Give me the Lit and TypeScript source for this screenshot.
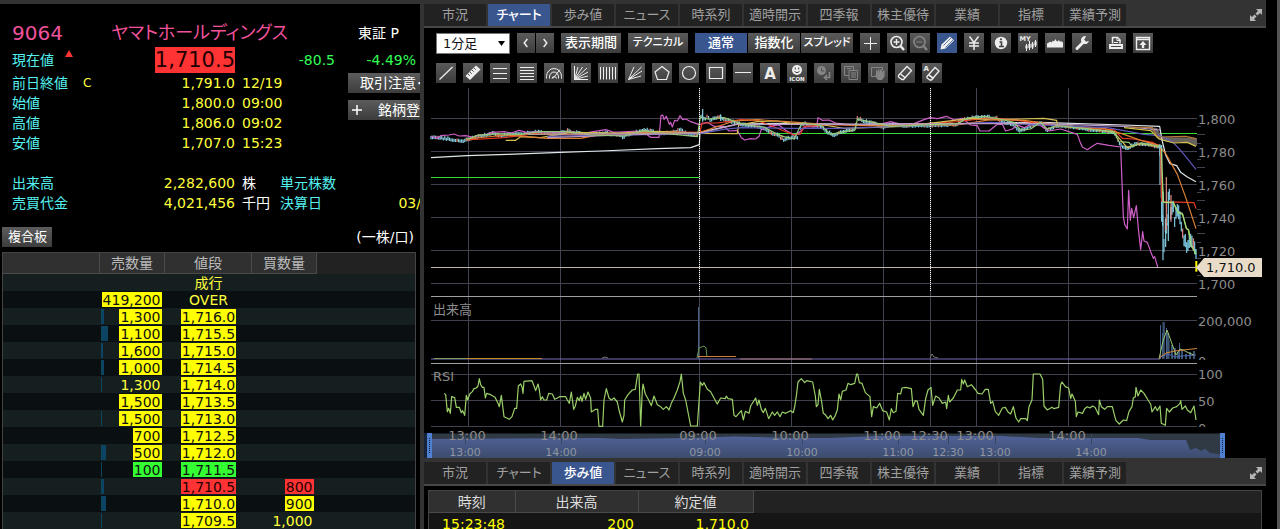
import { LitElement, html, svg, css, nothing } from "lit";
import { customElement, property, state } from "lit/decorators.js";
import { classMap } from "lit/directives/class-map.js";

const FONT = css`"DejaVu Sans", "Noto Sans CJK JP", sans-serif`;

/* ---------- icons, each on a 20 x 20 grid ---------- */
const ICONS: Record<string, unknown> = {
  cross: svg`<path d="M4 10.500H17M10.500 4V17"/>`,
  zoomIn: svg`<circle cx="9.500" cy="9" r="5.500" stroke-width="1.600"/><path d="M6.500 9h6M9.500 6v6" stroke-width="1.400"/><path d="M13.500 13l3.500 4" stroke-width="2.400"/>`,
  zoomOut: svg`<circle cx="9.500" cy="9" r="5.500" stroke-width="1.600"/><path d="M6.500 9h6"/><path d="M13.500 13l3.500 4" stroke-width="2.400"/>`,
  pencil: svg`<path d="M3.500 16.500l1-5L13 3.500l4 4-8.500 8z" fill="currentColor" stroke="none"/><path d="M6.500 12.500l7.500-7.500M8.500 14.500L16 7" stroke="#3c5a94" stroke-width=".8"/>`,
  yen: svg`<path d="M5.500 3.500L10 9.500l4.500-6M10 9.500V17M5 10h10M5 13h10" stroke-width="1.500"/>`,
  info: svg`<circle cx="10" cy="10" r="6.200" fill="currentColor" stroke="none"/><path d="M8.500 9H10.500V13.500M8 13.500h5" stroke="#444" stroke-width="1.600"/><circle cx="10" cy="6.300" r="1.100" fill="#444" stroke="none"/>`,
  candles: svg`<text x="1.500" y="7.500" font-size="6.500" font-weight="bold" fill="currentColor" stroke="none">MY</text><path d="M8.500 11v7M11.500 8v9M14.500 9v7M17.500 7v7"/><path d="M8.500 12.500v3M11.500 11v4M14.500 10.500v4M17.500 8.500v4" stroke-width="2.200"/>`,
  area: svg`<path d="M2 14.500V10.500l2-1 1-1 1.500 1L8 7.500l1 1L10.500 6l1 2 1 .5 1.500-1.500 1 2 1-1 2 1.500v5z" fill="currentColor" stroke="none"/>`,
  wrench: svg`<path d="M5 15.500L12 8.500" stroke-width="3" stroke-linecap="round"/><path d="M14 3.200a4 4 0 1 0 2.900 4.600l-2.800.9-2-1.800z" fill="currentColor" stroke="none"/>`,
  print: svg`<path d="M6.500 10.500V4.500h5l2.500 2.500v3.500" stroke-width="1.500"/><path d="M11 4.500V7.500h3M8 9.500h4"/><path d="M3 11h14v5H3z" fill="currentColor" stroke="none"/><path d="M5 13.500h10" stroke="#444"/>`,
  upload: svg`<path d="M3.500 4.500h13v12h-13zM3 6.500h14" stroke-width="1.400"/><path d="M10 8l3.500 4h-2.300v3H8.800v-3H6.500z" fill="currentColor" stroke="none"/>`,
  line: svg`<path d="M3.500 16.500L16.500 4" stroke-width="1.300"/>`,
  ruler: svg`<path d="M2.500 13L13 2.500l4.500 4L7 17z" fill="currentColor" stroke="none"/><path d="M5 11l1.800 1.800M7 9l1.800 1.800M9 7l1.800 1.800M11 5l1.800 1.800" stroke="#555"/>`,
  lines3: svg`<path d="M3 5.500h14M3 10.500h14M3 15.500h14"/>`,
  lines5: svg`<path d="M3 4.500h14M3 7.500h14M3 10.500h14M3 13.500h14M3 16.500h14"/>`,
  arcs: svg`<path d="M2.500 15.500v-2a7.500 8 0 0 1 15 0v2M5.500 15.500v-1.500a4.500 5 0 0 1 9 0v1.500M8 15.500a2.300 2.500 0 0 1 4.500 0M9 15.500l7-9"/>`,
  gann: svg`<path d="M3.500 3v13.500H17M3.500 16.500L7 4M3.500 16.500L11.500 4M3.500 16.500L16 5M3.500 16.500L17 9M3.500 16.500L17 13"/>`,
  bars: svg`<path d="M2.500 4v12.500M5.500 4v12.500M8.500 4v12.500M11.500 4v12.500M14.500 4v12.500M17.500 4v12.500"/>`,
  fan: svg`<path d="M3.500 16.500L9 4M3.500 16.500L16.500 4M3.500 16.500L17 8M3.500 16.500L16 13"/>`,
  pentagon: svg`<path d="M10 3.500L17 9l-2.500 7.500h-9L3 9z" stroke-width="1.200"/>`,
  circle: svg`<circle cx="10" cy="10" r="6.500" stroke-width="1.200"/>`,
  rect: svg`<path d="M3.500 4.500h13v11h-13z" stroke-width="1.200"/>`,
  hline: svg`<path d="M2 9.500h16"/>`,
  text: svg`<text x="10" y="15.500" text-anchor="middle" font-size="15" font-weight="bold" fill="currentColor" stroke="none">A</text>`,
  face: svg`<circle cx="10" cy="7" r="5" fill="currentColor" stroke="none"/><path d="M8.300 4.500v2M11.700 4.500v2M7.500 8.500q2.500 2.500 5 0" stroke="#444"/><text x="10" y="18" text-anchor="middle" font-size="5.500" font-weight="bold" fill="currentColor" stroke="none">ICON</text>`,
  history: svg`<circle cx="7.500" cy="7.500" r="4.500" fill="currentColor" stroke="none"/><path d="M7.500 5v3h3" stroke="#505050"/><path d="M15.500 9v5.500H11M13 12l-2.500 2.500L13 17" stroke-width="1.600"/>`,
  copy: svg`<path d="M8 12.500H3.500v-9h9V7M6 5.500h4M8 7.500h8.500v9H8zM10 10h5M10 12h5M10 14h5"/>`,
  hand: svg`<path d="M7 13.500H3.500v-9h11V7"/><path d="M8 11V7.500h1.500V11l.5-4.500h1.500V10l.8-3.500H14V10l1-2.500h1.500v6L14 17h-4l-3-4z" fill="currentColor" stroke="none"/>`,
  eraser: svg`<path d="M3.500 12.500L12 3.500l4.500 4L8.500 16.500H7L3.500 14z" stroke-width="1.300"/><path d="M5.500 11l5 4" stroke-width="1.600"/>`,
  eraserAll: svg`<path d="M5 13.500L13 4.500l4 3.500-7.500 9H8L5 15z" stroke-width="1.300"/><path d="M7 12l4.500 3.500" stroke-width="1.600"/><text x="1.500" y="8" font-size="7" font-weight="bold" fill="currentColor" stroke="none">A</text>`,
  prev: svg`<path d="M11.500 5.500L8 10l3.500 4.500" stroke-width="1.600"/>`,
  next: svg`<path d="M8.500 5.500L12 10l-3.500 4.500" stroke-width="1.600"/>`,
  expand: svg`<path d="M10 4h6v6l-2-2-2.500 2.500-2-2L12 6zM4 10l2 2 2.500-2.500 2 2L8 14l2 2H4z" fill="currentColor" stroke="none"/>`,
};

const icon = (name: string) => html`<svg class="icon" viewBox="0 0 20 20" fill="none" stroke="currentColor" aria-hidden="true">${ICONS[name]}</svg>`;

/* ---------- quote panel ---------- */
type Tone = "hot" | "up" | "down" | "plain";
interface Level { sell?: string; price: string; buy?: string; bar: number; tone: Tone; size: Tone }

const LEVELS: Level[] = [
  { price: "成行", bar: 0, tone: "plain", size: "plain" },
  { sell: "419,200", price: "OVER", bar: 0, tone: "plain", size: "hot" },
  { sell: "1,300", price: "1,716.0", bar: 3, tone: "hot", size: "hot" },
  { sell: "1,100", price: "1,715.5", bar: 7, tone: "hot", size: "hot" },
  { sell: "1,600", price: "1,715.0", bar: 2, tone: "hot", size: "hot" },
  { sell: "1,000", price: "1,714.5", bar: 3, tone: "hot", size: "hot" },
  { sell: "1,300", price: "1,714.0", bar: 1, tone: "hot", size: "plain" },
  { sell: "1,500", price: "1,713.5", bar: 0, tone: "hot", size: "hot" },
  { sell: "1,500", price: "1,713.0", bar: 1, tone: "hot", size: "hot" },
  { sell: "700", price: "1,712.5", bar: 0, tone: "hot", size: "hot" },
  { sell: "500", price: "1,712.0", bar: 5, tone: "hot", size: "hot" },
  { sell: "100", price: "1,711.5", bar: 1, tone: "up", size: "up" },
  { price: "1,710.5", buy: "800", bar: 3, tone: "down", size: "down" },
  { price: "1,710.0", buy: "900", bar: 5, tone: "hot", size: "hot" },
  { price: "1,709.5", buy: "1,000", bar: 1, tone: "hot", size: "plain" },
];

@customElement("quote-panel")
class QuotePanel extends LitElement {
  static styles = css`
    :host { display: block; overflow: hidden; background: #000; color: #ffff3c; font: 14px/20px ${FONT}; white-space: nowrap; }
    .quote { padding-top: 15px; }
    .row { display: flex; align-items: center; padding-left: 12px; height: 20px; }
    .row > * { flex: none; }
    .title { height: 28px; color: #f0529c; font-size: 20px; }
    .code { width: 99px; }
    .name { width: 247px; margin: 0; font: inherit; font-size: 18px; font-feature-settings: "palt"; }
    .market { color: #fff; font-size: 14px; }
    .now { height: 26px; }
    .label { color: #55f0f0; width: 71px; }
    .now .label { width: 52px; }
    .arrow { width: 10px; height: 8px; fill: #f33; margin-bottom: 12px; }
    .now .last { margin-left: auto; background: #f33; color: #200; font-size: 21px; line-height: 26px; }
    .now-left { display: flex; align-items: center; width: 223px; }
    .diff { width: 100px; text-align: right; color: #3f5; }
    .ratio { width: 81px; text-align: right; color: #3f5; }
    .split { display: flex; }
    .prices { width: 348px; flex: none; }
    .flag { width: 20px; font-size: 12px; }
    .value { width: 132px; text-align: right; margin-right: 7px; }
    .unit { color: #fff; width: 38px; }
    .wide .sub { width: 100px; }
    .actions { display: flex; flex-direction: column; gap: 7px; flex: none; }
    button { font: inherit; color: #fff; border: 0; padding: 0 6px; height: 20px; line-height: 20px; background: linear-gradient(#5c5c5c, #3c3c3c); text-align: left; }
    .actions button { display: flex; align-items: center; width: 100px; height: 20px; padding: 0 0 0 12px; }
    .actions .add { padding-left: 4px; gap: 16px; }
    .add svg { width: 10px; height: 10px; stroke: #fff; stroke-width: 1.5; }
    .gap { height: 20px; }
    .bar { display: flex; justify-content: space-between; align-items: center; padding: 14px 6px 5px 2px; color: #fff; }
    .bar button { font-size: 13px; width: 50px; }
    table { border-collapse: collapse; table-layout: fixed; width: calc(100% - 6px); margin-left: 2px; background: #202020; border: 1px solid #444; border-bottom: 0; }
    th { height: 20px; line-height: 20px; padding: 0; font-weight: normal; color: #bbb; background: #303030; border-right: 1px solid #4a4a4a; border-bottom: 1px solid #4a4a4a; }
    th:last-child { background: #222; border: 0; }
    td { height: 17px; line-height: 15px; padding: 0; }
    tbody tr { background: #0a1012; }
    tbody tr:nth-child(odd) { background: #151f20; }
    .c1 { width: 97px; } .c2 { width: 65px; } .c3 { width: 87px; } .c4 { width: 65px; }
    .cell { display: flex; align-items: center; height: 15px; padding: 1px 3px 1px 1px; }
    .centre { justify-content: center; padding-right: 0; }
    .depth { height: 15px; background: #0b4563; }
    .num { height: 15px; padding: 0 1px; line-height: 17px; overflow: hidden; }
    .cell .end { margin-left: auto; }
    .hot { background: #ff0; color: #111; }
    .up { background: #3f3; color: #111; }
    .down { background: #f33; color: #200; }
  `;

  private price(label: string, flag: string, value: string, when: string) {
    return html`<div class="row"><span class="label">${label}</span><span class="flag">${flag}</span><span class="value">${value}</span><span>${when}</span></div>`;
  }

  render() {
    return html`
      <section class="quote">
        <div class="row title"><span class="code">9064</span><h1 class="name">ヤマトホールディングス</h1><span class="market">東証 P</span></div>
        <div class="row now">
          <div class="now-left">
            <span class="label">現在値</span><svg class="arrow" viewBox="0 0 10 8"><path d="M5 0L9 7H1z"/></svg>
            <span class="last">1,710.5</span>
          </div>
          <span class="diff">-80.5</span><span class="ratio">-4.49%</span>
        </div>
        <div class="split">
          <div class="prices">
            ${this.price("前日終値", "C", "1,791.0", "12/19")}
            ${this.price("始値", "", "1,800.0", "09:00")}
            ${this.price("高値", "", "1,806.0", "09:02")}
            ${this.price("安値", "", "1,707.0", "15:23")}
          </div>
          <div class="actions">
            <button>取引注意･規制</button>
            <button class="add"><svg viewBox="0 0 10 10"><path d="M5 0V10M0 5H10"/></svg>銘柄登録</button>
          </div>
        </div>
        <div class="gap"></div>
        <div class="row wide"><span class="label">出来高</span><span class="flag"></span><span class="value">2,282,600</span><span class="unit">株</span><span class="label sub">単元株数</span></div>
        <div class="row wide"><span class="label">売買代金</span><span class="flag"></span><span class="value">4,021,456</span><span class="unit">千円</span><span class="label sub">決算日</span><span class="due">&emsp;&nbsp;03/31</span></div>
      </section>
      <div class="bar"><button>複合板</button><span>(一株/口)</span></div>
      <table>
        <colgroup><col class="c1"><col class="c2"><col class="c3"><col class="c4"><col></colgroup>
        <thead><tr><th></th><th>売数量</th><th>値段</th><th>買数量</th><th></th></tr></thead>
        <tbody>
          ${LEVELS.map((l) => html`<tr>
            <td></td>
            <td><div class="cell"><span class="depth" style="width:${l.bar}px"></span>${l.sell ? html`<span class="num end ${l.size}">${l.sell}</span>` : nothing}</div></td>
            <td><div class="cell centre"><span class="num ${l.tone}">${l.price}</span></div></td>
            <td><div class="cell">${l.buy ? html`<span class="num end ${l.size}">${l.buy}</span>` : nothing}</div></td>
            <td></td>
          </tr>`)}
        </tbody>
      </table>`;
  }
}

/* ---------- tab strip ---------- */
const TABS = ["市況", "チャート", "歩み値", "ニュース", "時系列", "適時開示", "四季報", "株主優待", "業績", "指標", "業績予測"];

@customElement("tab-strip")
class TabStrip extends LitElement {
  @property({ type: Number }) active = 0;
  static styles = css`
    :host { display: flex; align-items: stretch; gap: 2px; height: 22px; padding-top: 4px; background: #333; border-bottom: 2px solid #484848; }
    button { width: 62px; padding: 0; border: 0; background: #222; color: #a0a0a0; font: 13px/22px ${FONT}; font-feature-settings: "palt"; white-space: nowrap; }
    .on { background: #3a568f; color: #fff; font-weight: 500; }
    .expand { width: 20px; margin-left: auto; background: none; color: #b5b5b5; }
    .icon { display: block; width: 20px; height: 20px; }
  `;
  render() {
    return html`${TABS.map((t, i) => html`<button class=${classMap({ on: i === this.active })} @click=${() => (this.active = i)}>${t}</button>`)}
      <button class="expand" aria-label="拡大">${icon("expand")}</button>`;
  }
}

/* ---------- chart toolbar ---------- */
const DRAW = ["line", "ruler", "lines3", "lines5", "arcs", "gann", "bars", "fan", "pentagon", "circle", "rect", "hline", "text", "face", "history", "copy", "hand", "eraser", "eraserAll"];
const OFF = new Set(["zoomOut", "history", "copy", "hand"]);

@customElement("chart-tools")
class ChartTools extends LitElement {
  @state() private mode = "通常";
  static styles = css`
    :host { display: flex; flex-direction: column; gap: 10px; padding: 5px 0 3px 12px; font: 13px/20px ${FONT}; font-feature-settings: "palt"; }
    .line { display: flex; align-items: center; gap: 7px; height: 20px; }
    .join { display: flex; gap: 1px; }
    .zoom { display: flex; gap: 3px; }
    button { box-sizing: border-box; flex: none; width: 20px; height: 20px; padding: 0; border: 0; background: linear-gradient(#5a5a5a, #3d3d3d); color: #eee; font: inherit; font-weight: 500; white-space: nowrap; }
    .text { width: 60px; color: #fff; }
    .mode { width: 52px; color: #fff; }
    .small { font-size: 11px; }
    .step { width: 18px; }
    .on { background: #3a568f; }
    .off { color: #858585; }
    .apart { margin-left: 7px; }
    .icon { display: block; width: 20px; height: 20px; font-family: "DejaVu Sans", sans-serif; }
    .step .icon { width: 18px; }
    .pick { position: relative; display: flex; align-items: center; width: 74px; }
    select { appearance: none; box-sizing: border-box; width: 100%; height: 21px; padding: 0 6px; border: 1px solid #777; border-radius: 0; background: #fff; color: #111; font: inherit; line-height: 19px; }
    .caret { position: absolute; right: 5px; width: 7px; height: 5px; pointer-events: none; }
  `;
  private tool(name: string, cls = "") {
    return html`<button class="${cls} ${OFF.has(name) ? "off" : ""}" aria-label=${name}>${icon(name)}</button>`;
  }
  render() {
    return html`
      <div class="line">
        <label class="pick"><select aria-label="足種"><option>1分足</option><option>5分足</option><option>日足</option></select>
          <svg class="caret" viewBox="0 0 7 5"><path d="M0 0H7L3.500 5z"/></svg></label>
        <div class="join">${this.tool("prev", "step")}${this.tool("next", "step")}</div>
        <button class="text">表示期間</button><button class="text small">テクニカル</button>
        <div class="join">${["通常", "指数化", "スプレッド"].map((m) => html`<button class=${classMap({ mode: true, small: m.length > 4, on: m === this.mode })} @click=${() => (this.mode = m)}>${m}</button>`)}</div>
        ${this.tool("cross")}
        <div class="zoom">${this.tool("zoomIn")}${this.tool("zoomOut")}</div>
        ${this.tool("pencil", "on")}${this.tool("yen")}${this.tool("info")}${this.tool("candles")}${this.tool("area")}${this.tool("wrench")}
        ${this.tool("print", "apart")}${this.tool("upload")}
      </div>
      <div class="line">${DRAW.map((n) => this.tool(n))}</div>`;
  }
}

/* ---------- chart ---------- */
/* Series points are stored at three units per chart pixel, origin at the left edge of the chart. */
const HOURS: [number, string, number][] = [
  [468, "13:00", 465], [560, "14:00", 561], [699, "09:00", 705], [791, "10:00", 802],
  [883, "11:00", 898], [930, "12:30", 948], [976, "13:00", 995], [1068, "14:00", 1091],
];

const PRICE = "21,156 40,158 80,163 120,168 130,164 150,158 180,151 205,146 230,152 260,149 300,145 340,142 400,147 430,138 460,144 500,149 540,145 590,150 597,158 605,150 640,142 660,134 690,140 710,146 740,142 770,135 790,148 820,148 826,130 830,95 836,92 842,105 850,90 858,106 870,100 890,96 900,104 940,115 960,121 1000,124 1020,130 1040,145 1060,150 1080,165 1100,157 1120,158 1135,115 1160,120 1190,124 1210,142 1230,150 1250,140 1293,134 1298,98 1318,108 1338,112 1378,127 1408,118 1438,122 1518,122 1598,118 1620,102 1680,96 1718,100 1738,112 1768,118 1784,138 1804,132 1828,120 1848,112 1868,136 1898,122 1948,126 1998,134 2038,138 2068,142 2078,155 2088,180 2108,192 2118,186 2138,176 2168,178 2208,187";

const LINES: [string, string][] = [
  ["#cf5fc8", "21,153 40,160 50,152 75,150 90,147 105,153 125,152 145,156 165,150 190,147 205,142 240,140 262,144 285,136 310,143 340,140 400,142 450,140 480,158 495,142 545,134 570,142 640,138 665,146 680,157 705,157 711,92 716,90 720,103 727,94 736,118 740,112 745,126 752,106 760,108 768,92 776,104 786,102 800,110 826,119 850,112 870,124 900,124 915,138 940,136 952,158 962,165 980,161 995,162 1005,154 1012,134 1050,122 1065,120 1085,136 1110,150 1128,140 1145,126 1178,125 1182,98 1195,106 1215,105 1235,114 1290,122 1380,115 1400,110 1430,118 1470,116 1500,104 1518,98 1540,101 1568,94 1590,105 1615,100 1640,120 1660,122 1668,138 1695,138 1720,118 1735,118 1745,138 1765,132 1780,120 1800,128 1825,116 1850,122 1875,138 1910,132 1960,148 1968,170 1975,186 1990,194 2005,184 2020,175 2055,181 2090,186 2098,395 2102,418 2110,432 2114,316 2119,406 2123,370 2129,398 2137,362 2143,430 2150,494 2156,440 2160,468 2170,472 2180,500 2188,520 2192,515 2201,546"],
  ["#dfe6ea", "21,218 130,212 250,208 409,202 530,198 700,191 800,188 826,179 828,142 940,117 1100,115 1300,118 1600,116 1850,112 2100,120 2207,124 2214,165 2225,210 2238,236 2258,242 2270,262 2290,276 2316,290"],
  ["#e83a22", "125,165 240,158 330,146 450,150 570,150 700,140 828,142 834,114 880,114 950,104 1000,106 1080,138 1110,150 1130,146 1140,124 1230,118 1320,122 1440,120 1600,110 1700,98 1780,106 1900,123 2000,130 2070,134 2095,160 2130,162 2185,172 2208,184 2216,350 2310,353 2316,371"],
  ["#d8c050", "245,166 275,166 290,155 350,158 440,142 580,144 700,139 828,145 940,146 944,120 1000,110 1060,108 1100,115 1200,120 1260,130 1440,124 1640,100 1700,104 1790,102 1860,100 1898,106 1900,122 2000,132 2070,142 2110,188 2150,176 2208,186"],
  ["#de8034", "125,162 250,150 370,160 470,160 540,147 700,143 828,142 930,108 1000,104 1090,110 1200,118 1340,122 1500,120 1600,120 1700,104 1800,106 1920,122 2040,130 2100,148 2150,166 2205,181 2225,206 2260,268 2285,337 2316,431"],
  ["#5e59bd", "370,154 480,152 828,146 900,133 950,128 1100,130 1240,130 1380,126 1700,112 1850,120 1950,124 2050,128 2160,148 2208,152 2245,170 2270,196 2316,253"],
  ["#b89ac5", "370,158 600,150 828,144 940,118 1080,118 1300,118 1600,116 1850,116 2100,124 2208,135"],
  ["#95c878", "130,163 160,151 220,146 290,148 350,140 430,140 500,150 600,153 660,136 690,142 820,155 829,96 850,102 900,98 940,112 980,122 1020,126 1060,148 1080,155 1110,162 1134,114 1190,121 1220,148 1260,140 1293,135 1300,103 1338,110 1400,124 1600,116 1630,99 1680,94 1728,102 1770,112 1790,135 1820,132 1850,112 1870,132 1898,122 2070,140 2085,170 2115,172 2125,186 2150,174 2208,184 2218,352 2248,353 2260,380 2275,385 2287,430 2293,434 2300,480 2310,488 2316,507"],
];

const CRASH = "2208,190 2212,320 2216,400 2219,500 2225,410 2231,430 2235,310 2240,385 2248,360 2252,400 2258,370 2268,400 2274,420 2280,460 2288,480 2296,470 2306,470 2312,490 2318,500";

const RSI = "61,310 65,314 70,365 74,355 79,370 83,320 92,323 97,352 106,352 112,368 116,362 122,376 127,316 131,330 137,312 145,305 150,296 157,294 162,288 166,266 170,284 175,292 180,292 184,324 188,310 200,314 213,322 222,340 226,350 232,316 240,380 248,384 256,388 264,380 272,355 278,355 283,288 290,282 294,290 297,310 300,274 324,272 330,288 335,302 342,282 346,300 350,330 355,320 360,330 368,330 374,310 385,312 392,328 400,324 407,320 425,320 430,330 436,340 442,306 449,358 454,348 460,322 466,332 470,318 474,334 480,310 485,328 492,306 500,325 502,366 515,358 521,358 525,409 536,409 540,330 547,296 555,324 562,330 570,324 580,336 585,360 595,396 600,376 602,330 612,314 625,300 634,298 641,252 645,252 650,408 655,300 657,282 664,312 674,330 682,347 690,318 700,344 710,350 718,358 727,350 735,360 742,340 750,324 760,300 768,275 772,252 778,310 785,330 800,408 820,408 824,350 829,276 835,286 840,278 850,298 860,305 870,324 880,342 890,324 904,326 907,318 912,326 925,328 930,376 936,380 952,362 958,390 964,364 975,370 980,348 995,324 1000,346 1005,330 1012,358 1018,368 1024,355 1034,386 1045,366 1052,376 1060,366 1068,380 1075,366 1085,370 1100,362 1108,368 1113,345 1118,310 1122,276 1132,266 1142,278 1148,272 1166,276 1174,318 1177,350 1182,344 1186,298 1192,330 1198,370 1204,374 1212,386 1220,376 1226,390 1234,376 1240,360 1245,312 1250,330 1255,304 1266,300 1272,280 1280,284 1292,280 1298,252 1301,252 1306,278 1314,280 1324,308 1338,320 1343,380 1348,350 1358,354 1367,340 1376,362 1388,366 1396,390 1402,356 1408,368 1416,364 1421,310 1430,312 1434,294 1445,292 1462,296 1467,350 1474,332 1480,334 1485,358 1498,376 1505,326 1512,300 1521,292 1526,346 1535,318 1545,324 1555,340 1565,336 1568,356 1573,316 1577,336 1588,324 1600,300 1610,300 1613,268 1618,282 1622,270 1630,290 1642,284 1655,300 1662,310 1674,312 1684,298 1693,298 1700,340 1706,334 1714,365 1724,376 1735,354 1744,352 1752,366 1760,372 1768,350 1776,384 1784,396 1790,386 1805,386 1810,392 1815,350 1824,330 1828,252 1848,252 1856,268 1860,348 1870,360 1884,352 1890,356 1904,352 1910,284 1914,276 1924,290 1934,294 1940,326 1944,312 1954,334 1957,380 1962,366 1976,370 1982,356 1990,350 1998,354 2005,348 2013,352 2024,374 2026,330 2032,350 2042,358 2050,350 2065,350 2070,370 2076,392 2086,402 2098,390 2108,392 2115,365 2124,350 2128,324 2134,320 2136,292 2142,318 2150,300 2160,310 2172,330 2180,342 2184,366 2194,350 2200,362 2208,348 2212,400 2224,406 2228,355 2236,366 2246,354 2258,350 2268,340 2270,332 2274,358 2284,348 2290,360 2300,368 2310,348 2314,376 2316,390";

/* One high-low stick per step along a guide line, centred on it. */
function sticks(guide: string, reach: number, step: number) {
  const pts = guide.split(" ").map((p) => p.split(",").map(Number));
  let up = "";
  let down = "";
  let seed = 7;
  for (let i = 0, x = pts[0][0]; x < pts[pts.length - 1][0]; x += step) {
    while (pts[i + 1][0] < x) i++;
    const [x0, y0] = pts[i];
    const [x1, y1] = pts[i + 1];
    const y = y0 + ((y1 - y0) * (x - x0)) / (x1 - x0);
    seed = (seed * 73 + 41) % 997;
    const a = (seed % reach) + 3;
    const stick = `M${x.toFixed(1)} ${(y - a).toFixed(1)}V${(y + reach + 2 - a / 2).toFixed(1)}`;
    if (seed % 7 === 0) up += stick;
    else down += stick;
  }
  return { up, down };
}

@customElement("price-chart")
class PriceChart extends LitElement {
  static styles = css`
    :host { display: block; }
    svg { display: block; width: 100%; height: auto; font: 13px ${FONT}; }
    .grid { stroke: #42424e; }
    .frame { stroke: #a0a0a0; }
    .session { stroke: #fff; stroke-dasharray: 1 1; }
    .series { fill: none; stroke-linejoin: round; stroke-width: 3.6; }
    .base { stroke: #35dc32; }
    .axis { fill: #8c8c8c; }
    .mini { font-size: 11px; fill: #8e96a4; text-anchor: middle; }
    .mid { text-anchor: middle; }
    .tag { fill: #e8dcc8; }
    .tag-text { fill: #111; }
  `;
  render() {
    const day = sticks(PRICE, 6, 4.6);
    const crash = sticks(CRASH, 26, 4);
    return html`<svg viewBox="424 86 842 372" role="img" aria-label="1分足チャート">
      <defs>
        <linearGradient id="nav" x1="0" y1="0" x2="0" y2="1"><stop offset="0" stop-color="#506199"/><stop offset="1" stop-color="#3c4c6c"/></linearGradient>
        <clipPath id="vol"><path d="M424 300H1266V360H424z"/></clipPath>
        <clipPath id="rsi"><path d="M424 364H1266V427H424z"/></clipPath>
      </defs>
      <path class="grid" d=${HOURS.map(([x]) => `M${x + 0.5} 88V427`).join("") + [118, 151, 184, 217, 250, 283, 320, 374, 400, 426].map((y) => `M431 ${y + 0.5}H1197`).join("")}/>
      <path class="grid" d=${Array.from({ length: 19 }, (_, i) => (i % 4 === 3 ? "" : `M1197 ${Math.round(127 + i * 8.25) - 0.5}h${i % 4 === 1 ? 8 : 4}`)).join("")}/>
      <path class="frame" d="M431 296.500H1197M431 363.500H1197"/>
      <path class="base" d="M431 177.500H699M699 133.500H1197"/>
      <path d="M1148 127L1157 128 1162 137 1197 138V146L1186 142 1172 143 1160 140 1152 131z" fill="#67615e"/>
      <g class="series" transform="translate(424 85) scale(.33333)">
        <path stroke="#86cde0" d=${day.down}/><path stroke="#e08a80" d=${day.up}/>
        ${LINES.map(([c, p]) => svg`<polyline stroke=${c} points=${p}/>`)}
        <path stroke="#b8773c" d="M2120 126L2185 128 2200 156 2285 154 2316 161"/>
        <path stroke="#d0c048" d="M2100 128L2180 137 2205 162 2250 174 2290 172 2316 184"/>
        <path stroke="#b8a095" stroke-width="4" d="M310 148L600 146 828 143"/>
        <path stroke="#79c5dd" d=${crash.down}/><path stroke="#e08a80" d=${crash.up}/>
        <path stroke="#86cde0" d="M2208 178V300M2217 320V526M2213 180V410M2233 320V468M2225 400V486M836 72V110M890 88V108"/>
        <path stroke="#e04030" d="M2210 190L2213 350"/><path stroke="#e08a80" d="M2227 276V435M2241 330V410"/>
        <path stroke="#a5d870" d="M2212 190L2218 352 2248 352 2262 382 2276 388 2288 432 2294 434 2302 482 2316 508"/>
        <path stroke="#ff0" stroke-width="6" d="M2317 528V560"/>
      </g>
      <path d="M431 267.500H1197" stroke="#bdb5aa"/>
      <path class="session" d="M699.500 88V291M930.500 88V291"/>

      <g clip-path="url(#vol)">
        <path d="M431 359H1160" stroke="#7a6cb8"/>
        <path d="M434 358.500H466" stroke="#7aa05c"/><path d="M466 358.500H542" stroke="#c08c28"/><path d="M740 359H812" stroke="#a2756f"/>
        <path d="M698.500 307V359M1160.500 325V359M1162.500 333V359M1164 322V359M1166.500 328V359M1169 340V359M1179.500 343V359" stroke="#45628c"/>
        <path d="M1163.500 322V359M1168 333V359M1172 345V359M1175 348V359M1178 352V359M1182 350V359M1186 354V359M1190 352V359M1194 351V359" stroke="#39526f" stroke-width="2"/>
        <path d="M1160 357L1168 354 1175 357 1182 356 1196 355" stroke="#5367b5" fill="none"/>
        <path d="M697 358L699 348 704 346 706 348 707 357" stroke="#5f9850" fill="none"/>
        <path d="M698 356.500H736" stroke="#d08040"/><path d="M602 358l3-1 3 1M930 358l2-4 2 3 4 1" stroke="#777" fill="none"/>
        <path d="M1159 359L1163 341 1167 330 1171 341 1176 355 1180 349 1183 350 1189 353 1194 355" stroke="#9cc870" fill="none"/>
        <path d="M1159 358L1166 353 1175 351 1183 350 1197 348.500" stroke="#d5893c" fill="none"/>
        <text class="axis" x="1198" y="366">0</text>
      </g>
      <g clip-path="url(#rsi)">
        <g class="series" transform="translate(424 290) scale(.33333)"><polyline stroke="#9bcf68" points=${RSI}/></g>
        <text class="axis" x="1198" y="433">0</text>
      </g>

      <g class="axis">
        <text x="433" y="314">出来高</text><text x="433" y="381">RSI</text>
        ${["1,800", "1,780", "1,760", "1,740", "1,720", "1,700"].map((t, i) => svg`<text x="1198" y=${124 + 33 * i}>${t}</text>`)}
        <text x="1198" y="326">200,000</text><text x="1198" y="379">100</text><text x="1198" y="406">50</text>
      </g>
      <path class="tag" d="M1196 267.500L1204 258H1262V277H1204z"/><text class="tag-text" x="1206" y="272">1,710.0</text>

      <path d="M424 433.500H1225V458H424z" fill="#303a44"/>
      <path d="M424 458V439L600 438 620 439 690 438 735 436.500 790 438 830 438 880 436 1000 436 1040 438 1138 438 1150 440 1186 440 1190 450 1196 448 1201 451 1205 449 1210 453 1225 455V458z" fill="url(#nav)"/>
      <path d="M424 434H427V458H424z" fill="#172338"/>
      <path d=${HOURS.map(([, , x]) => `M${x + 0.5} 434V444`).join("")} stroke="#39455c"/>
      <path d="M427 433H432V458H427zM1220 433H1225V458H1220z" fill="#4f7fd0"/>
      <path d="M429.500 438V454M1222.500 438V454" stroke="#123" stroke-dasharray="1 1"/>
      ${HOURS.map(([x, t, m]) => svg`<text class="axis mid" x=${x - 1} y="440">${t}</text><text class="mini" x=${m} y="456">${t}</text>`)}
    </svg>`;
  }
}

/* ---------- page ---------- */
@customElement("app-root")
class AppRoot extends LitElement {
  static styles = css`
    :host { display: block; height: 100vh; overflow: hidden; background: #000; }
    .page { display: flex; height: 100%; box-sizing: border-box; }
    .left { flex: none; width: 420px; border-top: 4px solid #333; border-right: 4px solid #333; }
    .right { flex: 1; min-width: 0; padding-right: 11px; border-right: 3px solid #555; }
    .ticks { margin: 4px 4px 0; background: #151515; border: 1px solid #444; min-height: 60px; }
    table { width: 100%; table-layout: fixed; border-collapse: collapse; font: 14px/20px ${FONT}; color: #ff0; }
    th { height: 21px; padding: 0; background: #303030; color: #ddd; font-weight: normal; border-right: 1px solid #4a4a4a; border-bottom: 1px solid #4a4a4a; }
    th:last-child { background: #222; border: 0; }
    td { padding: 1px 4px 0 0; text-align: right; }
    .time { padding-right: 10px; }
    .t1 { width: 86px; } .t2 { width: 123px; } .t3 { width: 115px; }
  `;
  render() {
    return html`<main class="page">
      <quote-panel class="left"></quote-panel>
      <div class="right">
        <tab-strip .active=${1}></tab-strip>
        <chart-tools></chart-tools>
        <price-chart></price-chart>
        <tab-strip .active=${2}></tab-strip>
        <div class="ticks"><table>
          <colgroup><col class="t1"><col class="t2"><col class="t3"><col></colgroup>
          <thead><tr><th>時刻</th><th>出来高</th><th>約定値</th><th></th></tr></thead>
          <tbody><tr><td class="time">15:23:48</td><td>200</td><td>1,710.0</td><td></td></tr></tbody>
        </table></div>
      </div>
    </main>`;
  }
}
